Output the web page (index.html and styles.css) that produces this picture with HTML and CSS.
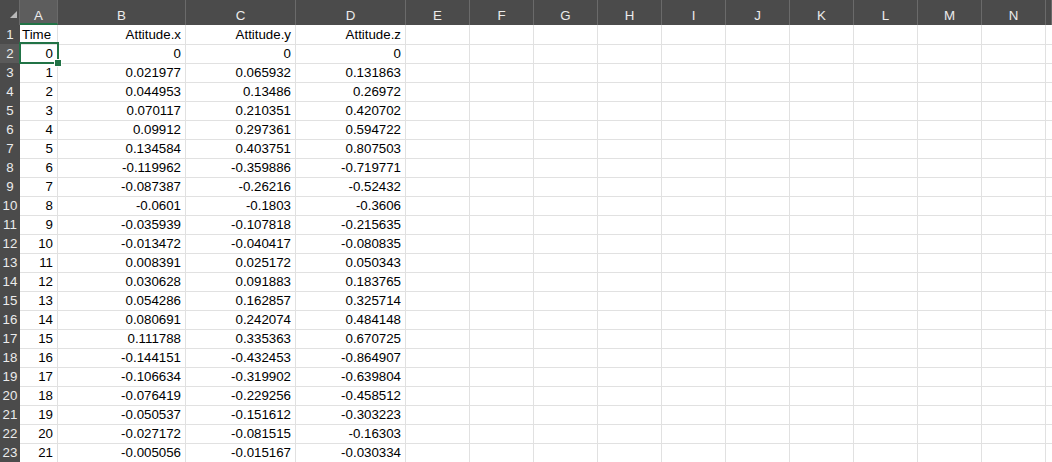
FILE: index.html
```html
<!DOCTYPE html>
<html>
<head>
<meta charset="utf-8">
<link rel="stylesheet" href="styles.css">
</head>
<body>
<div class="sheet">
  <div class="row head">
    <div class="corner"><svg width="20" height="25" viewBox="0 0 20 25"><polygon points="17,11 17,18 10,18" fill="#b9b9b9"/></svg></div>
    <div class="ch sel">A</div><div class="ch">B</div><div class="ch">C</div><div class="ch">D</div><div class="ch">E</div><div class="ch">F</div><div class="ch">G</div><div class="ch">H</div><div class="ch">I</div><div class="ch">J</div><div class="ch">K</div><div class="ch">L</div><div class="ch">M</div><div class="ch">N</div><div class="ch"></div>
  </div>
  <div class="row"><div class="rh">1</div><div class="c l">Time</div><div class="c">Attitude.x</div><div class="c">Attitude.y</div><div class="c">Attitude.z</div><div class="c"></div><div class="c"></div><div class="c"></div><div class="c"></div><div class="c"></div><div class="c"></div><div class="c"></div><div class="c"></div><div class="c"></div><div class="c"></div><div class="c"></div></div>
  <div class="row"><div class="rh sel">2</div><div class="c">0</div><div class="c">0</div><div class="c">0</div><div class="c">0</div><div class="c"></div><div class="c"></div><div class="c"></div><div class="c"></div><div class="c"></div><div class="c"></div><div class="c"></div><div class="c"></div><div class="c"></div><div class="c"></div><div class="c"></div></div>
  <div class="row"><div class="rh">3</div><div class="c">1</div><div class="c">0.021977</div><div class="c">0.065932</div><div class="c">0.131863</div><div class="c"></div><div class="c"></div><div class="c"></div><div class="c"></div><div class="c"></div><div class="c"></div><div class="c"></div><div class="c"></div><div class="c"></div><div class="c"></div><div class="c"></div></div>
  <div class="row"><div class="rh">4</div><div class="c">2</div><div class="c">0.044953</div><div class="c">0.13486</div><div class="c">0.26972</div><div class="c"></div><div class="c"></div><div class="c"></div><div class="c"></div><div class="c"></div><div class="c"></div><div class="c"></div><div class="c"></div><div class="c"></div><div class="c"></div><div class="c"></div></div>
  <div class="row"><div class="rh">5</div><div class="c">3</div><div class="c">0.070117</div><div class="c">0.210351</div><div class="c">0.420702</div><div class="c"></div><div class="c"></div><div class="c"></div><div class="c"></div><div class="c"></div><div class="c"></div><div class="c"></div><div class="c"></div><div class="c"></div><div class="c"></div><div class="c"></div></div>
  <div class="row"><div class="rh">6</div><div class="c">4</div><div class="c">0.09912</div><div class="c">0.297361</div><div class="c">0.594722</div><div class="c"></div><div class="c"></div><div class="c"></div><div class="c"></div><div class="c"></div><div class="c"></div><div class="c"></div><div class="c"></div><div class="c"></div><div class="c"></div><div class="c"></div></div>
  <div class="row"><div class="rh">7</div><div class="c">5</div><div class="c">0.134584</div><div class="c">0.403751</div><div class="c">0.807503</div><div class="c"></div><div class="c"></div><div class="c"></div><div class="c"></div><div class="c"></div><div class="c"></div><div class="c"></div><div class="c"></div><div class="c"></div><div class="c"></div><div class="c"></div></div>
  <div class="row"><div class="rh">8</div><div class="c">6</div><div class="c">-0.119962</div><div class="c">-0.359886</div><div class="c">-0.719771</div><div class="c"></div><div class="c"></div><div class="c"></div><div class="c"></div><div class="c"></div><div class="c"></div><div class="c"></div><div class="c"></div><div class="c"></div><div class="c"></div><div class="c"></div></div>
  <div class="row"><div class="rh">9</div><div class="c">7</div><div class="c">-0.087387</div><div class="c">-0.26216</div><div class="c">-0.52432</div><div class="c"></div><div class="c"></div><div class="c"></div><div class="c"></div><div class="c"></div><div class="c"></div><div class="c"></div><div class="c"></div><div class="c"></div><div class="c"></div><div class="c"></div></div>
  <div class="row"><div class="rh">10</div><div class="c">8</div><div class="c">-0.0601</div><div class="c">-0.1803</div><div class="c">-0.3606</div><div class="c"></div><div class="c"></div><div class="c"></div><div class="c"></div><div class="c"></div><div class="c"></div><div class="c"></div><div class="c"></div><div class="c"></div><div class="c"></div><div class="c"></div></div>
  <div class="row"><div class="rh">11</div><div class="c">9</div><div class="c">-0.035939</div><div class="c">-0.107818</div><div class="c">-0.215635</div><div class="c"></div><div class="c"></div><div class="c"></div><div class="c"></div><div class="c"></div><div class="c"></div><div class="c"></div><div class="c"></div><div class="c"></div><div class="c"></div><div class="c"></div></div>
  <div class="row"><div class="rh">12</div><div class="c">10</div><div class="c">-0.013472</div><div class="c">-0.040417</div><div class="c">-0.080835</div><div class="c"></div><div class="c"></div><div class="c"></div><div class="c"></div><div class="c"></div><div class="c"></div><div class="c"></div><div class="c"></div><div class="c"></div><div class="c"></div><div class="c"></div></div>
  <div class="row"><div class="rh">13</div><div class="c">11</div><div class="c">0.008391</div><div class="c">0.025172</div><div class="c">0.050343</div><div class="c"></div><div class="c"></div><div class="c"></div><div class="c"></div><div class="c"></div><div class="c"></div><div class="c"></div><div class="c"></div><div class="c"></div><div class="c"></div><div class="c"></div></div>
  <div class="row"><div class="rh">14</div><div class="c">12</div><div class="c">0.030628</div><div class="c">0.091883</div><div class="c">0.183765</div><div class="c"></div><div class="c"></div><div class="c"></div><div class="c"></div><div class="c"></div><div class="c"></div><div class="c"></div><div class="c"></div><div class="c"></div><div class="c"></div><div class="c"></div></div>
  <div class="row"><div class="rh">15</div><div class="c">13</div><div class="c">0.054286</div><div class="c">0.162857</div><div class="c">0.325714</div><div class="c"></div><div class="c"></div><div class="c"></div><div class="c"></div><div class="c"></div><div class="c"></div><div class="c"></div><div class="c"></div><div class="c"></div><div class="c"></div><div class="c"></div></div>
  <div class="row"><div class="rh">16</div><div class="c">14</div><div class="c">0.080691</div><div class="c">0.242074</div><div class="c">0.484148</div><div class="c"></div><div class="c"></div><div class="c"></div><div class="c"></div><div class="c"></div><div class="c"></div><div class="c"></div><div class="c"></div><div class="c"></div><div class="c"></div><div class="c"></div></div>
  <div class="row"><div class="rh">17</div><div class="c">15</div><div class="c">0.111788</div><div class="c">0.335363</div><div class="c">0.670725</div><div class="c"></div><div class="c"></div><div class="c"></div><div class="c"></div><div class="c"></div><div class="c"></div><div class="c"></div><div class="c"></div><div class="c"></div><div class="c"></div><div class="c"></div></div>
  <div class="row"><div class="rh">18</div><div class="c">16</div><div class="c">-0.144151</div><div class="c">-0.432453</div><div class="c">-0.864907</div><div class="c"></div><div class="c"></div><div class="c"></div><div class="c"></div><div class="c"></div><div class="c"></div><div class="c"></div><div class="c"></div><div class="c"></div><div class="c"></div><div class="c"></div></div>
  <div class="row"><div class="rh">19</div><div class="c">17</div><div class="c">-0.106634</div><div class="c">-0.319902</div><div class="c">-0.639804</div><div class="c"></div><div class="c"></div><div class="c"></div><div class="c"></div><div class="c"></div><div class="c"></div><div class="c"></div><div class="c"></div><div class="c"></div><div class="c"></div><div class="c"></div></div>
  <div class="row"><div class="rh">20</div><div class="c">18</div><div class="c">-0.076419</div><div class="c">-0.229256</div><div class="c">-0.458512</div><div class="c"></div><div class="c"></div><div class="c"></div><div class="c"></div><div class="c"></div><div class="c"></div><div class="c"></div><div class="c"></div><div class="c"></div><div class="c"></div><div class="c"></div></div>
  <div class="row"><div class="rh">21</div><div class="c">19</div><div class="c">-0.050537</div><div class="c">-0.151612</div><div class="c">-0.303223</div><div class="c"></div><div class="c"></div><div class="c"></div><div class="c"></div><div class="c"></div><div class="c"></div><div class="c"></div><div class="c"></div><div class="c"></div><div class="c"></div><div class="c"></div></div>
  <div class="row"><div class="rh">22</div><div class="c">20</div><div class="c">-0.027172</div><div class="c">-0.081515</div><div class="c">-0.16303</div><div class="c"></div><div class="c"></div><div class="c"></div><div class="c"></div><div class="c"></div><div class="c"></div><div class="c"></div><div class="c"></div><div class="c"></div><div class="c"></div><div class="c"></div></div>
  <div class="row"><div class="rh">23</div><div class="c">21</div><div class="c">-0.005056</div><div class="c">-0.015167</div><div class="c">-0.030334</div><div class="c"></div><div class="c"></div><div class="c"></div><div class="c"></div><div class="c"></div><div class="c"></div><div class="c"></div><div class="c"></div><div class="c"></div><div class="c"></div><div class="c"></div></div>
  <div class="selection"><span class="handle"></span></div>
</div>
</body>
</html>
```
FILE: styles.css
```css
html, body {
  margin: 0;
  padding: 0;
  background: #ffffff;
}
body {
  width: 1052px;
  height: 462px;
  overflow: hidden;
  font-family: "Liberation Sans", Arial, sans-serif;
}
.sheet {
  position: relative;
  width: 1052px;
}
.row {
  display: grid;
  grid-template-columns: 20px 38px 128px 110px 110px 64px 64px 64px 64px 64px 64px 64px 64px 64px 64px 6px;
  height: 19px;
}
.row.head {
  height: 25px;
  background: #4b4b4b;
}
.corner {
  box-sizing: border-box;
  border-right: 1px solid #6a6a6a;
  height: 25px;
}
.corner svg {
  display: block;
}
.ch {
  box-sizing: border-box;
  border-right: 1px solid #6a6a6a;
  color: #ececec;
  font-size: 13.3px;
  text-align: center;
  padding-top: 6px;
  line-height: 19px;
  height: 25px;
}
.ch.sel {
  background: #5d5d5d;
  border-bottom: 2px solid #217346;
}
.rh {
  box-sizing: border-box;
  background: #4b4b4b;
  border-bottom: 1px solid #6a6a6a;
  color: #ececec;
  font-size: 13.3px;
  text-align: center;
  padding-top: 1px;
  line-height: 18px;
}
.rh.sel {
  background: #5a5a5a;
}
.c {
  box-sizing: border-box;
  border-right: 1px solid #e1e1e1;
  border-bottom: 1px solid #e1e1e1;
  color: #000000;
  font-size: 13.3px;
  text-align: right;
  padding: 1px 4px 0 2px;
  line-height: 18px;
  white-space: nowrap;
  overflow: hidden;
}
.c.l {
  text-align: left;
}
.selection {
  position: absolute;
  left: 19px;
  top: 42px;
  width: 40px;
  height: 22px;
  box-sizing: border-box;
  border: 2px solid #217346;
}
.handle {
  position: absolute;
  right: -5px;
  bottom: -5px;
  width: 6px;
  height: 6px;
  background: #217346;
  border: 1px solid #ffffff;
}
```
